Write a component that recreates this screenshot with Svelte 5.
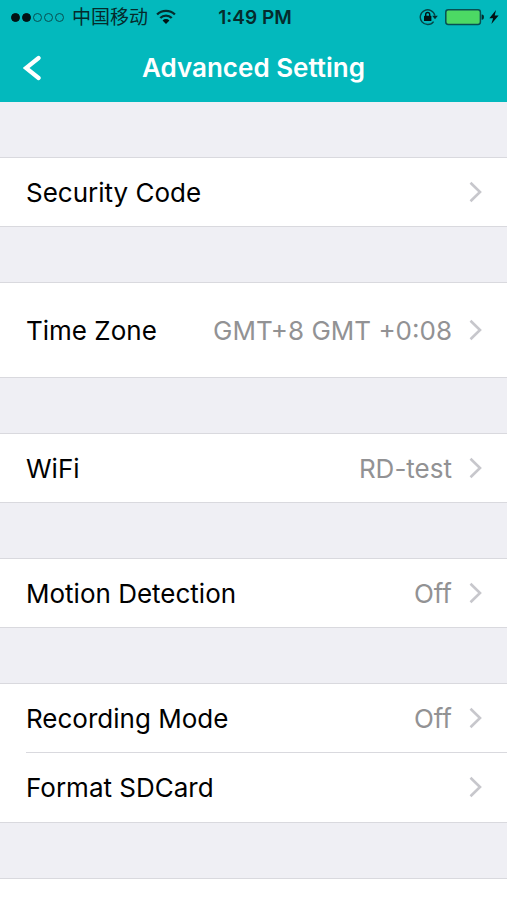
<script>
  const groups = [
    [{ label: 'Security Code', value: '' }],
    [{ label: 'Time Zone', value: 'GMT+8 GMT +0:08', tall: true }],
    [{ label: 'WiFi', value: 'RD-test' }],
    [{ label: 'Motion Detection', value: 'Off' }],
    [
      { label: 'Recording Mode', value: 'Off' },
      { label: 'Format SDCard', value: '' }
    ]
  ];
  const signal = [true, true, false, false, false];
</script>

<div class="screen">
  <header>
    <div class="status">
      <div class="carrier">
        <span class="dots">
          {#each signal as on}
            <i class:on></i>
          {/each}
        </span>
        <span class="name">中国移动</span>
        <svg width="20" height="16" viewBox="0 0 20 16" aria-hidden="true">
          <g fill="none" stroke="#052b2c" stroke-width="2.4">
            <path d="M1.1 5.5a12.7 12.7 0 0 1 17.8 0" />
            <path d="M4.3 9a8.1 8.1 0 0 1 11.4 0" />
          </g>
          <path d="M6.6 11.5a4.8 4.8 0 0 1 6.8 0L10 15z" fill="#021214" />
        </svg>
      </div>
      <time>1:49 PM</time>
      <div class="power">
        <svg width="20" height="18" viewBox="0 0 20 18" aria-hidden="true">
          <path d="M14.6 13.6A7.4 7.4 0 1 1 15.9 7.6" fill="none" stroke="#064446" stroke-width="1.4" />
          <path d="M13.2 7.8h5.6L16 11.2z" fill="#052b2c" />
          <rect x="5" y="7.8" width="7.4" height="5.2" rx="0.6" fill="#021214" />
          <path d="M6.7 8.4V6.5a2 2 0 0 1 4 0v1.9" fill="none" stroke="#021214" stroke-width="1.4" />
        </svg>
        <svg width="40" height="18" viewBox="0 0 40 18" aria-hidden="true">
          <rect x="1.8" y="1.8" width="34.6" height="14.6" rx="2.4" fill="#4cd964" stroke="#075052" stroke-width="1.5" />
          <path d="M37.6 6.4h0.6a1.8 2.7 0 0 1 0 5.4h-0.6z" fill="#052b2c" />
        </svg>
        <svg width="10" height="18" viewBox="0 0 10 18" aria-hidden="true">
          <path d="M7 2 0.4 10.2h3.7L2.4 16 9.6 7.6H5.7z" fill="#021214" />
        </svg>
      </div>
    </div>
    <nav>
      <button class="back" aria-label="Back">
        <svg width="18" height="26" viewBox="0 0 18 26" aria-hidden="true">
          <path d="M15.6 3 3 13 15.6 23" fill="none" stroke="#fff" stroke-width="4.2" stroke-linecap="round" stroke-linejoin="miter" />
        </svg>
      </button>
      <h1>Advanced Setting</h1>
    </nav>
  </header>

  <main>
    {#each groups as rows}
      <section>
        {#each rows as row}
          <button class="row" class:tall={row.tall}>
            <span class="label">{row.label}</span>
            <span class="value">{row.value}</span>
            <svg width="14" height="22" viewBox="0 0 14 22" aria-hidden="true">
              <path d="M1.5 1.8 11 11 1.5 20.2" fill="none" stroke="#c7c7cc" stroke-width="2.6" />
            </svg>
          </button>
        {/each}
      </section>
    {/each}
    <section class="rest"></section>
  </main>
</div>

<style>
  :global(body) {
    margin: 0;
  }
  .screen {
    display: flex;
    flex-direction: column;
    height: 100vh;
    overflow: hidden;
    background: #efeff4;
    font-family: Inter, "Noto Sans CJK SC", sans-serif;
    color: #000;
  }
  header {
    flex: none;
    background: #03b9bd;
  }
  .status {
    display: grid;
    grid-template-columns: 1fr auto 1fr;
    align-items: center;
    height: 34px;
    padding: 0 8px 0 11px;
    color: #052b2c;
  }
  .carrier,
  .dots,
  .power {
    display: flex;
    align-items: center;
  }
  .carrier {
    gap: 8px;
  }
  .dots {
    gap: 2px;
  }
  .dots i {
    box-sizing: border-box;
    width: 9px;
    height: 9px;
    border: 1px solid #075052;
    border-radius: 50%;
  }
  .dots i.on {
    background: #021214;
    border-color: #021214;
  }
  .name,
  time {
    padding-top: 2px;
    font-size: 19px;
    line-height: 24px;
  }
  time {
    font-weight: 600;
  }
  .power {
    justify-content: flex-end;
    gap: 5px;
  }
  nav {
    display: grid;
    grid-template-columns: 64px 1fr 64px;
    align-items: center;
    height: 68px;
  }
  button {
    border: 0;
    background: none;
    font: inherit;
    color: inherit;
    cursor: pointer;
  }
  .back {
    display: flex;
    align-items: center;
    height: 68px;
    padding: 0 0 0 23px;
  }
  h1 {
    margin: 0;
    text-align: center;
    font-size: 26px;
    line-height: 32px;
    font-weight: 600;
    color: #fff;
  }
  main {
    display: flex;
    flex: 1;
    flex-direction: column;
    gap: 55px;
    padding-top: 55px;
  }
  section {
    flex: none;
    border-top: 1px solid #d9d9de;
    border-bottom: 1px solid #d9d9de;
    background: #fff;
  }
  .rest {
    flex: 1;
    border-bottom: 0;
  }
  .row {
    position: relative;
    display: flex;
    align-items: center;
    width: 100%;
    height: 68px;
    padding: 0 24px 0 26px;
    font-size: 26px;
    line-height: 32px;
    text-align: left;
  }
  .row + .row {
    height: 70px;
  }
  .row + .row::before {
    content: "";
    position: absolute;
    top: 0;
    right: 0;
    left: 26px;
    border-top: 1px solid #d9d9de;
  }
  .tall {
    height: 94px;
  }
  .label,
  .value {
    padding-top: 2px;
  }
  .value {
    margin-left: auto;
    padding-right: 17px;
    color: #929294;
  }
</style>
